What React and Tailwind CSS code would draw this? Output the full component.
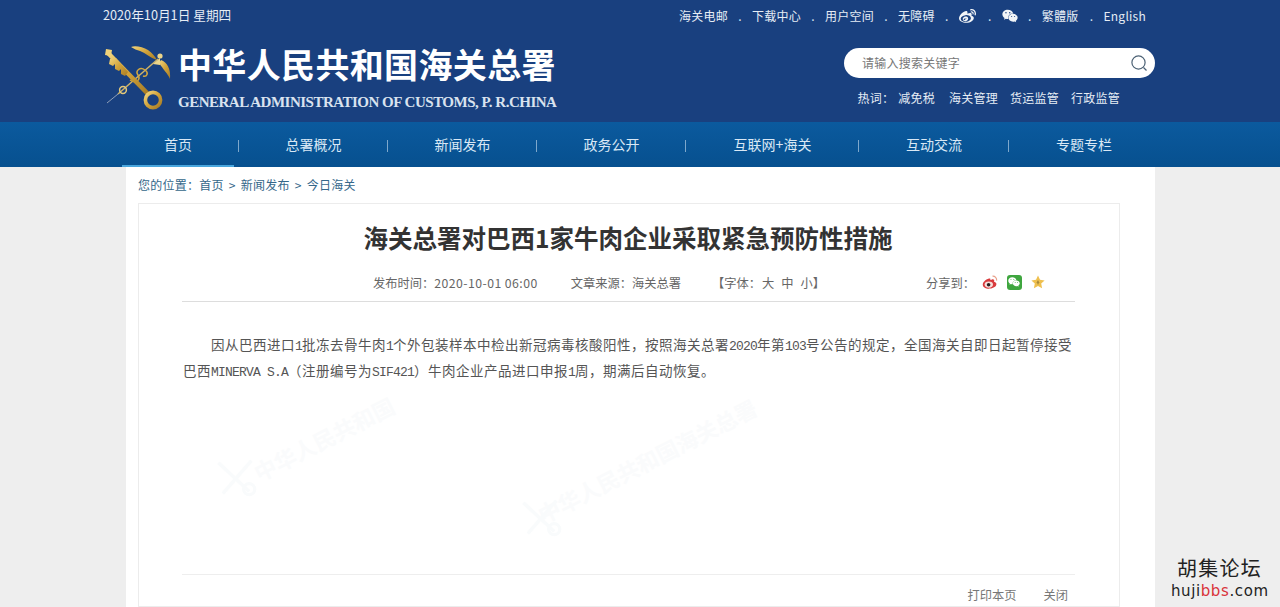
import React from "react";
import { FaWeibo, FaWeixin } from "react-icons/fa";

const sans = { fontFamily: '"Noto Sans CJK SC","Liberation Sans",sans-serif' };

function Logo() {
  return (
    <svg viewBox="0 0 70 68" className="w-[70px] h-[68px] shrink-0" fill="none">
      <defs>
        <linearGradient id="gold" x1="0" y1="0" x2="1" y2="1">
          <stop offset="0" stopColor="#f3d67e" />
          <stop offset="0.5" stopColor="#d0a23a" />
          <stop offset="1" stopColor="#a67c26" />
        </linearGradient>
      </defs>
      <path d="M5 58 L16 49" stroke="#8f9fb8" strokeWidth="1" />
      <path d="M16 49 L56 14" stroke="#cdb36a" strokeWidth="1.5" />
      <circle cx="21" cy="45" r="3.4" stroke="#e4c979" strokeWidth="1.5" />
      <path d="M28 35 C34 39 39 35 36 30 C33 26 38 21 43 25 C47 28 45 32 41 31" stroke="#d3a73f" strokeWidth="1.5" />
      <path d="M6 8 L46 49" stroke="url(#gold)" strokeWidth="4.6" />
      <path d="M4 4 L10 5 L9 11 L3 10 Z" fill="#f0d27a" />
      <path d="M8 14 L7 19 L11 21 L13 19 L13 24 L17 26 L19 24 L19 29 L23 31 L26 27 L14 13 Z" fill="url(#gold)" />
      <circle cx="51" cy="55" r="7.6" stroke="url(#gold)" strokeWidth="3.6" />
      <path d="M29 2 C33 0 41 2 46 5 C50 8 53 11 55 15 C48 13 44 8 38 6 C35 5 32 4 29 2 Z" fill="url(#gold)" />
      <path d="M59 15 C65 17 69 24 68 34 C66 29 61 24 57 18 Z" fill="url(#gold)" />
      <circle cx="58" cy="11" r="2.6" fill="#ecd58a" />
      <path d="M58 13 L51 19 L58 20 Z" fill="#ecd58a" />
    </svg>
  );
}

function Dot() {
  return <span className="text-[#dbe5f0] text-[12px] w-[5px] text-center leading-none">.</span>;
}

function TopLinks() {
  const items = [
    "海关电邮",
    "下载中心",
    "用户空间",
    "无障碍",
    <FaWeibo key="w" className="text-[17px] text-[#f2f5f8] mr-[2px]" />,
    <FaWeixin key="x" className="text-[16px] text-[#f2f5f8]" />,
    <span key="f" className="mr-[1px]">繁體版</span>,
    "English",
  ];
  return (
    <div className="flex items-center gap-[9.5px] text-[12px] tracking-[0.25px] text-[#e6edf5] h-[32px] pr-[9px]">
      {items.map((it, i) => (
        <React.Fragment key={i}>
          {i > 0 && <Dot />}
          {it}
        </React.Fragment>
      ))}
    </div>
  );
}

function Nav() {
  const items = [
    ["总署概况", "w-[149px]"],
    ["新闻发布", "w-[149px]"],
    ["政务公开", "w-[149px]"],
    ["互联网+海关", "w-[173px]"],
    ["互动交流", "w-[150px]"],
    ["专题专栏", "w-[150px]"],
  ];
  return (
    <nav className="h-[45px] bg-gradient-to-b from-[#0b5a9e] to-[#07508f] flex pl-[122px] text-[14px] text-[#d9e8f5]">
      <div className="w-[112px] h-full flex items-center justify-center border-b-[2px] border-[#49a6dd] mr-[5px] pt-[2px]">首页</div>
      {items.map(([t, w]) => (
        <React.Fragment key={t}>
          <span className="w-px h-[12px] bg-[#7ea8cc] self-center mt-[3px] -ml-px" />
          <div className={`${w} h-full flex items-center justify-center`}>{t}</div>
        </React.Fragment>
      ))}
    </nav>
  );
}

function Faint({ className, text }) {
  return (
    <div className={`absolute pointer-events-none select-none whitespace-nowrap text-[#fafbfc] -rotate-[27deg] origin-left text-[22px] font-bold leading-none ${className}`}>
      {text}
    </div>
  );
}

function FaintMark({ className }) {
  return (
    <svg viewBox="0 0 40 40" className={`absolute w-[44px] h-[44px] ${className}`} fill="none" stroke="#f9fbfc" strokeWidth="3">
      <path d="M4 8 L32 34" />
      <path d="M8 36 L34 6" />
      <circle cx="32" cy="32" r="5" />
    </svg>
  );
}

function WeiboColor() {
  return (
    <svg viewBox="0 0 16 16" className="w-[16px] h-[16px]" fill="none">
      <path d="M7 4.5 C3.5 5.5 .5 8.5 .8 11 C1.2 14 5 15 8 14.6 C11.5 14.2 14.5 12.4 14.4 10 C14.3 8.6 13 8 12 7.8 C12.6 6.4 12.2 5 10 5.4 C9 5.6 8.6 6 8.4 6 C8.6 5 8.4 4.2 7 4.5 Z" fill="#d93a3c" />
      <ellipse cx="6.8" cy="10.6" rx="4.2" ry="3.1" fill="#f6dcd8" />
      <circle cx="6.6" cy="10.8" r="1.8" fill="#2a1f1f" />
      <path d="M10.5 2.2 C13 2 15 4 14.6 6.6" stroke="#e8a08a" strokeWidth="1.2" />
    </svg>
  );
}

function StarColor() {
  return (
    <svg viewBox="0 0 14 14" className="w-[14px] h-[14px]">
      <path d="M7 .6 L9 4.8 L13.6 5.4 L10.2 8.5 L11.1 13.2 L7 10.9 L2.9 13.2 L3.8 8.5 L.4 5.4 L5 4.8 Z" fill="#efc04f" />
      <path d="M7 5 L8.2 7.2 L7 10 L5.8 7.2 Z" fill="#a98a3a" />
    </svg>
  );
}

const Lat = ({ children }) => <span className="text-[13px] tracking-[-0.8px]">{children}</span>;

export default function App() {
  return (
    <div className="relative h-[607px] overflow-hidden bg-[#eeeeee]" style={sans}>
      <header className="h-[122px] bg-[#19407f] pl-[103px] pr-[125px] flex justify-between">
        <div>
          <div className="h-[30px] flex items-center text-[12.7px] text-[#e6edf5]">2020年10月1日 星期四</div>
          <div className="flex mt-[15px] -ml-[1px]">
            <Logo />
            <div className="ml-[6px] text-white">
              <div className="text-[34px] tracking-[0.35px] font-bold leading-[40px] -mt-[1px]">中华人民共和国海关总署</div>
              <div className="text-[15px] font-bold leading-[18px] mt-[9px] tracking-[-0.5px] text-[#d9e3ef] whitespace-nowrap" style={{ fontFamily: '"Liberation Serif",serif' }}>
                GENERAL ADMINISTRATION OF CUSTOMS, P. R.CHINA
              </div>
            </div>
          </div>
        </div>
        <div className="flex flex-col items-end">
          <TopLinks />
          <div className="mt-[16px] w-[311px] h-[30px] bg-white rounded-full flex items-center justify-between pl-[18px] pr-[7px] text-[12px] tracking-[0.25px] text-[#777]">
            <span>请输入搜索关键字</span>
            <svg viewBox="0 0 18 18" className="w-[18px] h-[18px]" fill="none" stroke="#4d6275" strokeWidth="1.2">
              <circle cx="8.5" cy="8.5" r="6.6" />
              <path d="M13.5 13.5 L16.5 16.5" />
            </svg>
          </div>
          <div className="mt-[11px] pr-[35px] flex gap-[12px] text-[12px] tracking-[0.25px] text-[#e6edf5] leading-[18px]">
            <span className="-mr-[8px]">热词：</span>
            <span className="mr-[2px]">减免税</span>
            <span>海关管理</span>
            <span>货运监管</span>
            <span>行政监管</span>
          </div>
        </div>
      </header>
      <Nav />
      <main className="relative ml-[126px] w-[1029px] h-[440px] bg-white pl-[12px] pr-[35px]">
        <div className="h-[36px] flex items-center text-[12px] tracking-[0.25px] text-[#35678a]">
          您的位置：首页<span className="mx-[5px]">&gt;</span>新闻发布<span className="mx-[5px]">&gt;</span>今日海关
        </div>
        <article className="relative overflow-hidden h-[404px] border border-[#ececec] pl-[43px] pr-[44px]">
          <Faint className="left-[116px] top-[258px]" text="中华人民共和国" />
          <Faint className="left-[400px] top-[300px]" text="中华人民共和国海关总署" />
          <FaintMark className="left-[75px] top-[250px]" />
          <FaintMark className="left-[380px] top-[290px]" />
          <h1 className="text-[24.5px] font-bold text-[#333] text-center leading-[36px] mt-[16px] pr-[1px]">海关总署对巴西1家牛肉企业采取紧急预防性措施</h1>
          <div className="mt-[12px] h-[30px] flex items-center text-[12.25px] text-[#666] border-b border-[#dddddd] pb-[3px] box-content whitespace-nowrap">
            <span className="ml-[191px]">发布时间：<span className="tracking-[0.45px]">2020-10-01 06:00</span></span>
            <span className="ml-[33px]">文章来源：海关总署</span>
            <span className="ml-[31px]">【字体：</span>
            <span className="ml-[1px]">大</span>
            <span className="ml-[7px]">中</span>
            <span className="ml-[7px]">小</span>
            <span>】</span>
            <span className="ml-[101px]">分享到：</span>
            <span className="ml-[7px] flex items-center gap-[9px] -mt-[2px]">
              <WeiboColor />
              <span className="w-[15px] h-[15px] rounded-[3px] bg-[#3fa63f] flex items-center justify-center">
                <FaWeixin className="text-[12px] text-white" />
              </span>
              <StarColor />
            </span>
          </div>
          <div className="relative mt-[32px] text-[13.5px] leading-[26px] tracking-[0.5px] text-[#555] pl-[1px] whitespace-nowrap" style={{ fontFamily: '"Liberation Mono","Noto Sans CJK SC",monospace' }}>
            <p className="pl-[28px]">
              因从巴西进口<Lat>1</Lat>批冻去骨牛肉<Lat>1</Lat>个外包装样本中检出新冠病毒核酸阳性，按照海关总署<Lat>2020</Lat>年第<Lat>103</Lat>号公告的规定，全国海关自即日起暂停接受
            </p>
            <p>
              巴西<Lat>MINERVA S.A</Lat>（注册编号为<Lat>SIF421</Lat>）牛肉企业产品进口申报<Lat>1</Lat>周，期满后自动恢复。
            </p>
          </div>
          <div className="absolute left-[43px] right-[44px] top-[370px] border-t border-[#eeeeee] flex justify-end gap-[27px] pr-[7px] pt-[11px] text-[12.25px] text-[#777]">
            <span>打印本页</span>
            <span>关闭</span>
          </div>
        </article>
      </main>
      <div className="absolute right-[12px] bottom-[6px] w-[97px] text-center">
        <div className="text-[20px] leading-[26px] tracking-[1.2px] text-[#222]">胡集论坛</div>
        <div className="text-[15px] leading-[20px] tracking-[0.6px] text-[#222] whitespace-nowrap" style={{ fontFamily: '"DejaVu Sans",sans-serif' }}>
          huji<span className="text-[#d9333a]">bbs</span>.com
        </div>
      </div>
    </div>
  );
}
